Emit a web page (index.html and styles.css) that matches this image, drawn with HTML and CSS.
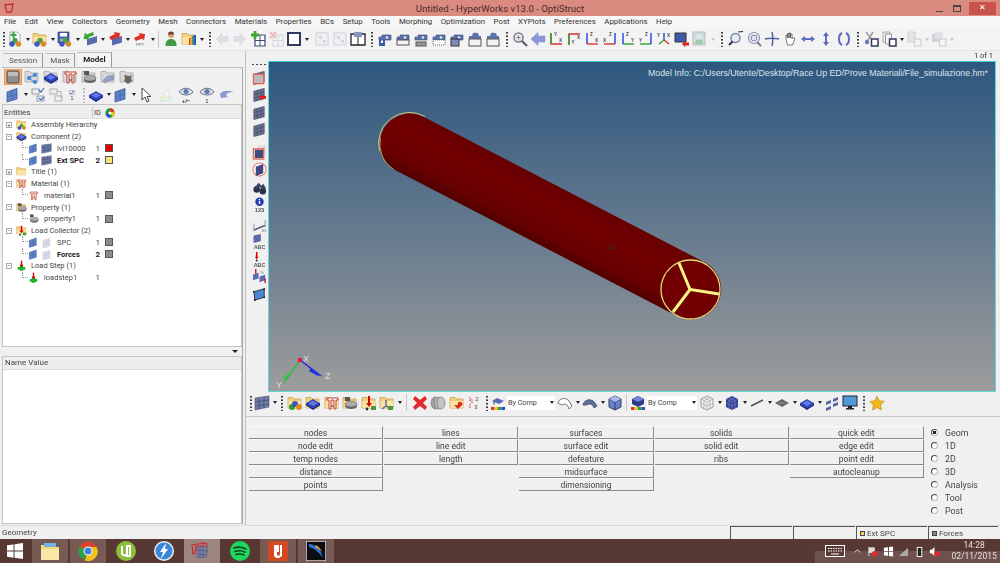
FILE: index.html
```html
<!DOCTYPE html>
<html lang="en">
<head>
<meta charset="utf-8">
<title>HyperWorks</title>
<link rel="stylesheet" href="styles.css">
</head>
<body>
<svg class="defs" width="0" height="0" aria-hidden="true">
  <defs>
    <symbol id="folder" viewBox="0 0 16 16"><path d="M1 4V2.500h5l1 1.500h7v9H1z" fill="#f4cf78" stroke="#c9a050" stroke-width=".8"/><path d="M1.500 6h12.500v7H1.500z" fill="#fbe3a4"/></symbol>
    <symbol id="balls" viewBox="0 0 16 16"><circle cx="8" cy="9.500" r="2.700" fill="#4aa53a"/><circle cx="5" cy="13" r="2.700" fill="#3c55c0"/><circle cx="11.500" cy="13" r="2.700" fill="#d98a25"/></symbol>
    <symbol id="panel" viewBox="0 0 16 16"><path d="M2 5l10-3.500v10.500l-10 3z" fill="#5f81c6" stroke="#2f4f95" stroke-width=".7"/><path d="M7 3.500v10.500M2 10l10-3" stroke="#3c5ba0" stroke-width=".5"/></symbol>
    <symbol id="meshp" viewBox="0 0 16 16"><path d="M2 4.500l11-3v11l-11 3z" fill="#6b7390" stroke="#3c4368" stroke-width=".7"/><path d="M5.500 3.500v11M9.500 2.500v11M2 8l11-3M2 12l11-3" stroke="#3c4368" stroke-width=".6"/></symbol>
    <symbol id="faintp" viewBox="0 0 16 16"><path d="M3 5l10-3v11l-10 3z" fill="#d9dce6" stroke="#bcc0cc" stroke-width=".6"/><path d="M8 3.500v11M3 10l10-3" stroke="#bcc0cc" stroke-width=".5"/></symbol>
    <symbol id="disc" viewBox="0 0 16 16"><path d="M8 4.500l7 4-7 4.500-7-4.500z" fill="#2e45c8" stroke="#1c2a85" stroke-width=".6"/><path d="M1 8.500v2l7 4.500 7-4.500v-2l-7 4.500z" fill="#1e2d8c"/><path d="M8 5.500l4.500 2.800-4.500 2.800-4.500-2.800z" fill="#5f78ea"/></symbol>
    <symbol id="matl" viewBox="0 0 16 16"><path d="M3 3h11v2h-2v9h-2V5H7v9H5V5H3z" fill="#fff" stroke="#c8402f" stroke-width="1"/><path d="M7.200 11h2.600" stroke="#444"/></symbol>
    <symbol id="prop" viewBox="0 0 16 16"><ellipse cx="9" cy="11" rx="6" ry="3" fill="#666"/><ellipse cx="9" cy="9" rx="6" ry="3" fill="#aaa" stroke="#555" stroke-width=".5"/><path d="M3 2h5v4H3z" fill="#555"/></symbol>
    <symbol id="load" viewBox="0 0 16 16"><path d="M8 1v9" stroke="#d00" stroke-width="2"/><path d="M5 8l3 4 3-4z" fill="#d00"/><rect x="10" y="11" width="5" height="4" fill="#4a9a3a"/><circle cx="6" cy="14" r="1.400" fill="#333"/></symbol>
    <symbol id="step" viewBox="0 0 16 16"><path d="M5.500 7h5v3h3v4h-3v1.500h-5V14h-3v-4h3z" fill="#20b030"/><path d="M8 1v8" stroke="#d00" stroke-width="2"/><path d="M5.500 7l2.500 4 2.500-4z" fill="#d00"/></symbol>
    <symbol id="wheel" viewBox="0 0 16 16"><circle cx="8" cy="8" r="7.500" fill="#1d9a3a"/><path d="M8 8V.5a7.500 7.500 0 0 1 7 5z" fill="#e23030"/><path d="M8 8l7-2.500A7.500 7.500 0 0 1 12 14.500z" fill="#e8c420"/><path d="M8 8V15.500A7.500 7.500 0 0 1 1 10.500z" fill="#2a50d0"/><circle cx="8" cy="8" r="2.500" fill="#fff"/></symbol>

    <symbol id="i-new" viewBox="0 0 16 16"><path d="M3 1h7l3 3v9H3z" fill="#fff" stroke="#889" stroke-width=".7"/><path d="M6.500 1v6M3.500 4h6" stroke="#3aa545" stroke-width="2"/><use href="#balls"/></symbol>
    <symbol id="i-open" viewBox="0 0 16 16"><use href="#folder"/><use href="#balls"/></symbol>
    <symbol id="i-save" viewBox="0 0 16 16"><path d="M1 1h11v11H1z" fill="#4f63a8" stroke="#2d3c78" stroke-width=".7"/><path d="M3 2h7v3.500H3z" fill="#fff"/><path d="M3.500 8h6v4h-6z" fill="#c8cde0"/><use href="#balls"/></symbol>
    <symbol id="i-imp" viewBox="0 0 16 16"><path d="M5 14.500l10-3V5L5 8z" fill="#5a6cb0"/><path d="M11 1L5 3.500 3 1.500 1.500 8l6.500.500-1.800-2L12 4z" fill="#3da82e"/></symbol>
    <symbol id="i-exp" viewBox="0 0 16 16"><path d="M5 14.500l10-3V5L5 8z" fill="#5a6cb0"/><path d="M2 6l6-3-1.500-2 6.500 1-1 6.500-1.800-2L4 9z" fill="#dd2f25"/></symbol>
    <symbol id="i-ppt" viewBox="0 0 16 16"><path d="M2 7l6-3-1.500-2 6.500 1-1 6.500-1.800-2L4 10z" fill="#dd2f25"/><text x="8" y="15" font-size="4" text-anchor="middle" fill="#555" font-family="Liberation Sans">PPT</text></symbol>
    <symbol id="i-user" viewBox="0 0 16 16"><circle cx="8" cy="4" r="3" fill="#d9a070"/><path d="M5 3.500a3 3 0 0 1 6 0z" fill="#6b4326"/><path d="M2.500 15c0-5 2-7 5.500-7s5.500 2 5.500 7z" fill="#3f9a45"/></symbol>
    <symbol id="i-rain" viewBox="0 0 16 16"><use href="#folder"/><path d="M8 7h1.500v7H8z" fill="#e23030"/><path d="M9.500 6h1.500v8H9.500z" fill="#e8b420"/><path d="M11 5h1.500v9H11z" fill="#2aa040"/><path d="M12.500 4H15v10h-2.500z" fill="#2a50d0"/></symbol>
    <symbol id="i-al" viewBox="0 0 16 16"><path d="M2 8l6-6v3.500h6v5H8V14z" fill="#dfe1e8" stroke="#cfd2da" stroke-width=".5"/></symbol>
    <symbol id="i-ar" viewBox="0 0 16 16"><path d="M14 8L8 2v3.500H2v5h6V14z" fill="#dfe1e8" stroke="#cfd2da" stroke-width=".5"/></symbol>
    <symbol id="i-plusg" viewBox="0 0 16 16"><path d="M5 4h10v11H5z" fill="#fff" stroke="#3c4a78" stroke-width="1.200"/><path d="M10 4v11M5 9.500h10" stroke="#3c4a78"/><path d="M5 0v8M1 4h8" stroke="#3fa535" stroke-width="2.800"/></symbol>
    <symbol id="i-xg" viewBox="0 0 16 16"><path d="M5 4h10v11H5z" fill="#f4f4f6" stroke="#d5d6de"/><path d="M10 4v11M5 9.500h10" stroke="#d5d6de"/><path d="M2 1l6 6M8 1L2 7" stroke="#eebcbc" stroke-width="2"/></symbol>
    <symbol id="i-sq" viewBox="0 0 16 16"><rect x="2" y="2" width="12" height="12" fill="#fff" stroke="#333a60" stroke-width="2"/></symbol>
    <symbol id="i-fg" viewBox="0 0 16 16"><rect x="2" y="2" width="12" height="12" fill="#eef0f4" stroke="#d5d6de" stroke-width="1.200"/><rect x="5" y="5" width="3" height="3" fill="#d5d6de"/><rect x="9" y="9" width="3" height="3" fill="#d5d6de"/></symbol>
    <symbol id="i-book" viewBox="0 0 16 16"><path d="M1 3h14v11H1z" fill="#fff" stroke="#222" stroke-width="1.300"/><path d="M8 3v11" stroke="#222"/><path d="M4 1h8v5H4z" fill="#8894c2"/></symbol>
    <symbol id="cam" viewBox="0 0 16 16"><path d="M2 6h3V4h9v5H2z" fill="#5b72ac" stroke="#38497f" stroke-width=".6"/><circle cx="10" cy="6.500" r="1.800" fill="#dfe4f2" stroke="#38497f" stroke-width=".6"/></symbol>
    <symbol id="c1" viewBox="0 0 16 16"><use href="#cam"/><path d="M2 9h6v6H2z" fill="#3f5aa8"/><path d="M4 9.500h2V12H4z" fill="#fff"/></symbol>
    <symbol id="c2" viewBox="0 0 16 16"><use href="#cam"/><rect x="2" y="9" width="12" height="5" fill="#f4f4f4" stroke="#555"/></symbol>
    <symbol id="c3" viewBox="0 0 16 16"><use href="#cam"/><rect x="3" y="11" width="10" height="4" fill="#999" stroke="#555"/></symbol>
    <symbol id="c4" viewBox="0 0 16 16"><use href="#cam"/><rect x="2" y="9" width="12" height="5" fill="#fff" stroke="#666" stroke-dasharray="1 1"/></symbol>
    <symbol id="c5" viewBox="0 0 16 16"><use href="#cam"/><rect x="2" y="8" width="8" height="7" fill="#7e8db8" stroke="#333"/></symbol>
    <symbol id="c6" viewBox="0 0 16 16"><path d="M2 5h3l1-3h5l1 3h2v5H2z" fill="#5b72ac"/><circle cx="8" cy="3" r="1.500" fill="#5b72ac"/><rect x="2" y="8" width="12" height="7" fill="#f4f4f4" stroke="#555"/></symbol>
    <symbol id="i-zoomg" viewBox="0 0 16 16"><circle cx="6.500" cy="6.500" r="4.500" fill="#e8e8e8" stroke="#7a7f8c" stroke-width="1.500"/><path d="M10 10l5 5" stroke="#5a5f70" stroke-width="2.200"/><path d="M4.500 6.500h4M6.500 4.500v4" stroke="#888"/></symbol>
    <symbol id="i-back" viewBox="0 0 16 16"><path d="M1 8l7-6.500V5h7v6H8v3.500z" fill="#8b98dc" stroke="#7c8ac8" stroke-width=".5"/></symbol>

    <symbol id="ax-yx" viewBox="0 0 16 16"><path d="M3 2v11h11" fill="none" stroke="#e03030" stroke-width="1.400"/><path d="M3 2v11" stroke="#20a830" stroke-width="1.400"/><text x="6" y="5" class="axt">Y</text><text x="11" y="10.500" class="axt">X</text></symbol>
    <symbol id="ax-xy" viewBox="0 0 16 16"><path d="M3 14V3h11" fill="none" stroke="#e03030" stroke-width="1.400"/><path d="M3 14V3" stroke="#20a830" stroke-width="1.400"/><text x="5.500" y="13" class="axt">Y</text><text x="11" y="8" class="axt">X</text></symbol>
    <symbol id="ax-zx" viewBox="0 0 16 16"><path d="M3 13h11" stroke="#e03030" stroke-width="1.400"/><path d="M3 2v11" stroke="#2540d8" stroke-width="1.400"/><text x="6" y="5" class="axt">Z</text><text x="11" y="10.500" class="axt">X</text></symbol>
    <symbol id="ax-xz" viewBox="0 0 16 16"><path d="M2 13h11" stroke="#e03030" stroke-width="1.400"/><path d="M13 2v11" stroke="#2540d8" stroke-width="1.400"/><text x="7" y="5" class="axt">Z</text><text x="1" y="10.500" class="axt">X</text></symbol>
    <symbol id="ax-zy" viewBox="0 0 16 16"><path d="M3 13h11" stroke="#20a830" stroke-width="1.400"/><path d="M3 2v11" stroke="#2540d8" stroke-width="1.400"/><text x="6" y="5" class="axt">Z</text><text x="11" y="10.500" class="axt">Y</text></symbol>
    <symbol id="ax-yz" viewBox="0 0 16 16"><path d="M2 13h11" stroke="#20a830" stroke-width="1.400"/><path d="M13 2v11" stroke="#2540d8" stroke-width="1.400"/><text x="7" y="5" class="axt">Z</text><text x="1" y="10.500" class="axt">Y</text></symbol>
    <symbol id="ax-iso" viewBox="0 0 16 16"><path d="M8 9V2" stroke="#2540d8" stroke-width="1.400"/><path d="M8 9l5 4" stroke="#e03030" stroke-width="1.400"/><path d="M8 9l-5 4" stroke="#20a830" stroke-width="1.400"/><text x="1" y="6" class="axt">Y</text><text x="11" y="6" class="axt">X</text></symbol>
    <symbol id="i-scr" viewBox="0 0 16 16"><path d="M1 2h11v9H1z" fill="#3f5aa8" stroke="#333"/><path d="M8 13l3-3v1.500h4v3h-4V16z" fill="#e02020"/></symbol>
    <symbol id="i-pers" viewBox="0 0 16 16"><path d="M1 1h12v13H1z" fill="#cfdde0" stroke="#bbb"/><circle cx="7" cy="6" r="2.500" fill="#e2e6ea"/><path d="M3 13c0-4 2-4.500 4-4.500s4 .500 4 4.500z" fill="#9fcaa8"/></symbol>
    <symbol id="i-zm" viewBox="0 0 16 16"><circle cx="7.500" cy="7" r="4.500" fill="#e8ecf6" stroke="#7886a8" stroke-width="1.500"/><path d="M4.500 10.500L1 14" stroke="#333" stroke-width="2"/><path d="M10 1l5-.5" stroke="#333" stroke-width="1.200"/></symbol>
    <symbol id="i-zo" viewBox="0 0 16 16"><circle cx="8" cy="7" r="5.500" fill="none" stroke="#8c94ae" stroke-width="1.200"/><circle cx="8" cy="7" r="3" fill="#dde2f0" stroke="#7886a8"/><path d="M11 11l4 4" stroke="#7a7f8c" stroke-width="2"/></symbol>
    <symbol id="i-cross" viewBox="0 0 16 16"><path d="M8 1c1 3 1 11 0 14M1 8c3-1 11-1 14 0" fill="none" stroke="#4f5f9a" stroke-width="1.500"/></symbol>
    <symbol id="i-hand" viewBox="0 0 16 16"><path d="M4 8V4h1.500v3V2.500H7V7V2h1.500v5V3H10v5l1.500-1.500 1.500 1-2.500 6.500h-5z" fill="#fff" stroke="#444" stroke-width=".7"/></symbol>
    <symbol id="i-h" viewBox="0 0 16 16"><path d="M1 8l4-3v2h6V5l4 3-4 3V9H5v2z" fill="#5c6cc0"/></symbol>
    <symbol id="i-v" viewBox="0 0 16 16"><path d="M8 1l3 4H9v6h2l-3 4-3-4h2V5H5z" fill="#5c6cc0"/></symbol>
    <symbol id="i-rot" viewBox="0 0 16 16"><path d="M6 2C2 4 2 12 6 14M10 2c4 2 4 10 0 12" fill="none" stroke="#5c6cc0" stroke-width="2"/></symbol>
    <symbol id="i-cut" viewBox="0 0 16 16"><path d="M3 1l7 9M10 1L5 9" stroke="#999" stroke-width="1.500"/><circle cx="4" cy="11" r="2.200" fill="#6a7ab0"/><rect x="8.500" y="8" width="6.500" height="7" fill="#fff" stroke="#333a60" stroke-width="1.500"/></symbol>
    <symbol id="i-copy" viewBox="0 0 16 16"><path d="M2 1h7v10H2z" fill="#eee" stroke="#aaa"/><path d="M4.500 3h6v10h-6z" fill="#f5f5f5" stroke="#999"/><rect x="8.500" y="8" width="6.500" height="7" fill="#fff" stroke="#333a60" stroke-width="1.500"/></symbol>
    <symbol id="i-paste" viewBox="0 0 16 16"><path d="M2 1h7v10H2z" fill="#e4e5ea" stroke="#d0d1d8"/><rect x="8.500" y="8" width="6.500" height="7" fill="#f6f6f8" stroke="#d0d1d8" stroke-width="1.200"/></symbol>
    <symbol id="i-paste2" viewBox="0 0 16 16"><path d="M1 3h9v8H1z" fill="#d0d3da"/><path d="M4 1h8v7H4z" fill="#e0e2e6"/><rect x="8.500" y="8" width="6.500" height="7" fill="#f6f6f8" stroke="#d0d1d8" stroke-width="1.200"/></symbol>

    <symbol id="l-active" viewBox="0 0 16 16"><rect x="2" y="2" width="12" height="12" rx="1" fill="#8f8f8f" stroke="#555"/><path d="M3 3h10v4H3z" fill="#bdbdbd"/></symbol>
    <symbol id="f-gray" viewBox="0 0 16 16"><path d="M1 4V2.500h5l1 1.500h7v9H1z" fill="#d8d8d8" stroke="#a0a0a0" stroke-width=".7"/></symbol>
    <symbol id="l-tree" viewBox="0 0 16 16"><use href="#f-gray"/><path d="M5 9l5-3M5 9l5 4" stroke="#2f6fd0"/><circle cx="5" cy="9" r="2" fill="#3a82e0"/><circle cx="11" cy="6" r="2" fill="#3a82e0"/><circle cx="11" cy="13" r="2" fill="#3a82e0"/></symbol>
    <symbol id="l-comp" viewBox="0 0 16 16"><use href="#f-gray"/><use href="#disc"/></symbol>
    <symbol id="l-matl" viewBox="0 0 16 16"><use href="#f-gray"/><use href="#matl"/></symbol>
    <symbol id="l-prop" viewBox="0 0 16 16"><use href="#f-gray"/><use href="#prop"/></symbol>
    <symbol id="l-surf" viewBox="0 0 16 16"><use href="#f-gray"/><path d="M3 12c3-5 7-6 11-5l-1 4c-4 0-6 1-8 3z" fill="#9aa2c8" stroke="#6a73a0" stroke-width=".6"/></symbol>
    <symbol id="l-stack" viewBox="0 0 16 16"><use href="#f-gray"/><path d="M5 6l5 1 3-1-1 3 1 3-4 3-4-3 1-3z" fill="#70625e"/></symbol>
    <symbol id="l-check" viewBox="0 0 16 16"><rect x="2" y="2" width="7" height="5" fill="#eee" stroke="#9a9aa8"/><rect x="7" y="9" width="7" height="5" fill="#eee" stroke="#9a9aa8"/><path d="M9 3l2 2 3-4M9 11l2 2 3-3" fill="none" stroke="#3f6fd0" stroke-width="1.200"/></symbol>
    <symbol id="l-uncheck" viewBox="0 0 16 16"><rect x="2" y="2" width="7" height="5" fill="#eee" stroke="#b0b0b8"/><rect x="7" y="9" width="7" height="5" fill="#eee" stroke="#b0b0b8"/><path d="M9 4.500h4v7" fill="none" stroke="#b0b0b8"/></symbol>
    <symbol id="l-check1" viewBox="0 0 16 16"><path d="M5 5l2 2 3-5" fill="none" stroke="#3f6fd0" stroke-width="1.200"/><rect x="5" y="2" width="6" height="5" fill="none" stroke="#aaa"/><text x="8" y="14" font-size="7" text-anchor="middle" fill="#444" font-family="Liberation Sans">1</text></symbol>
    <symbol id="l-arrow" viewBox="0 0 16 16"><path d="M4 1v12l3-3 2 5 2-1-2-4.500h4z" fill="#fff" stroke="#333" stroke-width=".9"/></symbol>
    <symbol id="l-erase" viewBox="0 0 16 16"><path d="M2 10h12v4H2z" fill="#dff3e8" stroke="#c8e6d8" stroke-width=".6"/><path d="M2 10h12v1H2z" fill="#f2ecae"/><path d="M6 10V5l4-2 2 3-2 4" fill="#f5f5f5" stroke="#ccc" stroke-width=".6"/></symbol>
    <symbol id="eye" viewBox="0 0 16 12"><path d="M1 5c3-5 11-5 14 0-3 4-11 4-14 0z" fill="#d8dbe6" stroke="#606a80" stroke-width=".9"/><circle cx="8" cy="4.500" r="2.500" fill="#5c7bb0"/></symbol>
    <symbol id="l-eyepm" viewBox="0 0 16 16"><use href="#eye" width="16" height="12"/><text x="8" y="15.500" font-size="6" text-anchor="middle" fill="#333" font-weight="700" font-family="Liberation Sans">+/−</text></symbol>
    <symbol id="l-eye1" viewBox="0 0 16 16"><use href="#eye" width="16" height="12"/><text x="8" y="15.500" font-size="6" text-anchor="middle" fill="#333" font-family="Liberation Sans">1</text></symbol>
    <symbol id="l-undo" viewBox="0 0 16 16"><path d="M1 7c3-4 8-4 14-2-5 0-7 1-8 3l2 2-7 1z" fill="#8c9ad0"/></symbol>

    <symbol id="v-1" viewBox="0 0 16 16"><use href="#meshp"/><rect x="1.500" y="4.500" width="11" height="10" fill="#e9dcd6" fill-opacity=".7" stroke="#e8604a" stroke-width="1.300"/></symbol>
    <symbol id="v-2" viewBox="0 0 16 16"><use href="#meshp"/><path d="M7 11l4-3v1.500h4v3h-4V14z" fill="#e02020"/></symbol>
    <symbol id="v-3" viewBox="0 0 16 16"><use href="#meshp"/></symbol>
    <symbol id="v-5" viewBox="0 0 16 16"><path d="M6 1l9-1v11H6z" fill="#dcdce2"/><path d="M3 5h9v9H3z" fill="#3f4a80"/><rect x="1.500" y="4" width="11" height="11" fill="none" stroke="#e8604a" stroke-width="1.300"/></symbol>
    <symbol id="v-6" viewBox="0 0 16 16"><circle cx="8" cy="8" r="7" fill="#fff" stroke="#e8806a" stroke-width="1.200"/><path d="M4 5l8-3v10l-8 3z" fill="#3f4a80"/></symbol>
    <symbol id="v-bino" viewBox="0 0 16 16"><circle cx="5" cy="10" r="3.500" fill="#2a3048"/><circle cx="11.500" cy="12" r="3.500" fill="#2a3048"/><path d="M3 8l4-5 3 3 2-2 3 5-4 1-3-3-2 3z" fill="#3a4060"/></symbol>
    <symbol id="v-info" viewBox="0 0 16 16"><circle cx="8" cy="5" r="4.500" fill="#1f3fb0"/><path d="M7.300 4h1.400v3.500H7.300zM7.300 2h1.400v1.200H7.300z" fill="#fff"/><text x="8" y="15.500" font-size="6.200" text-anchor="middle" font-weight="700" fill="#555" font-family="Liberation Sans">123</text></symbol>
    <symbol id="v-graph" viewBox="0 0 16 16"><path d="M2 14l12-5" stroke="#444a70" stroke-width="1.500"/><path d="M2 7v8M14 3v8" stroke="#8b90a8"/><text x="10" y="15.500" font-size="4" fill="#555" font-family="Liberation Sans">10²</text></symbol>
    <symbol id="v-abc" viewBox="0 0 16 16"><path d="M2 2l7-1.500v7L2 9z" fill="#5a6ab0" stroke="#333c78" stroke-width=".5"/><text x="8" y="15.500" font-size="5.800" text-anchor="middle" font-weight="700" fill="#555" font-family="Liberation Sans">ABC</text></symbol>
    <symbol id="v-abcf" viewBox="0 0 16 16"><path d="M5 0v6" stroke="#d00" stroke-width="1.600"/><path d="M3 5l2 3 2-3z" fill="#d00"/><circle cx="5" cy="9" r="1" fill="#222"/><text x="8" y="15.500" font-size="5.800" text-anchor="middle" font-weight="700" fill="#555" font-family="Liberation Sans">ABC</text></symbol>
    <symbol id="v-mix" viewBox="0 0 16 16"><path d="M1 6l6-2v6L1 12z" fill="#5a6ab0"/><path d="M8 8l6-2v6l-6 2z" fill="#5a6ab0"/><path d="M4 0v5" stroke="#d00" stroke-width="1.400"/><path d="M14 10v5" stroke="#d00" stroke-width="1.400"/><text x="9" y="5" font-size="4" fill="#555" font-family="Liberation Sans">%</text></symbol>
    <symbol id="v-sheet" viewBox="0 0 16 16"><path d="M2 5l11-3v9L3 14z" fill="#4a85d8" stroke="#333"/><circle cx="2" cy="5" r="1" fill="#222"/><circle cx="13" cy="2" r="1" fill="#222"/><circle cx="13" cy="11" r="1" fill="#222"/><circle cx="3" cy="14" r="1" fill="#222"/></symbol>

    <symbol id="b-gcomp" viewBox="0 0 16 16"><use href="#folder"/><circle cx="5" cy="12" r="3" fill="#2f9b30"/><circle cx="8" cy="9" r="3" fill="#3c55c0"/><circle cx="12" cy="12" r="3" fill="#e08a25"/></symbol>
    <symbol id="b-fdisc" viewBox="0 0 16 16"><use href="#folder"/><use href="#disc"/></symbol>
    <symbol id="b-fmat" viewBox="0 0 16 16"><use href="#folder"/><use href="#matl"/></symbol>
    <symbol id="b-fprop" viewBox="0 0 16 16"><use href="#folder"/><use href="#prop"/></symbol>
    <symbol id="b-fload" viewBox="0 0 16 16"><use href="#folder"/><use href="#load"/></symbol>
    <symbol id="b-fmeas" viewBox="0 0 16 16"><use href="#folder"/><path d="M7 5v6l6 3M7 11l-4 3" fill="none" stroke="#566a96" stroke-width="1.400"/><rect x="9" y="11" width="5" height="4" fill="#4a9a3a"/></symbol>
    <symbol id="b-del" viewBox="0 0 16 16"><path d="M3 1l5 4 5-4 2 3-4 4 4 4-2 3-5-4-5 4-2-3 4-4-4-4z" fill="#e02a32"/></symbol>
    <symbol id="b-disks" viewBox="0 0 16 16"><ellipse cx="5" cy="8" rx="4" ry="6" fill="#a4a4a4" stroke="#777" stroke-width=".7"/><ellipse cx="8" cy="8" rx="4" ry="6" fill="#b4b4b4" stroke="#777" stroke-width=".7"/><ellipse cx="11" cy="8" rx="4" ry="6" fill="#c4c4c4" stroke="#777" stroke-width=".7"/></symbol>
    <symbol id="b-fold-r" viewBox="0 0 16 16"><use href="#folder"/><path d="M9 7v3H5l4 4 5-5-2-2z" fill="#e02a20"/></symbol>
    <symbol id="b-num" viewBox="0 0 16 16"><path d="M3 2v4M3 9v5" stroke="#d03030" stroke-dasharray="1.500 1"/><text x="10" y="6" font-size="6" fill="#555" text-anchor="middle" font-family="Liberation Sans">2</text><text x="9" y="14" font-size="6" fill="#444" text-anchor="middle" font-family="Liberation Sans">3</text><text x="5" y="8" font-size="5" fill="#d03030" text-anchor="middle" font-family="Liberation Sans">1</text></symbol>
    <symbol id="b-sel" viewBox="0 0 16 16"><path d="M2 6l5-3 7 3-5 3z" fill="#5a6cb8"/><path d="M4 6.500v3" stroke="#555" stroke-width="1.300"/><rect x="1" y="12" width="3.500" height="3" fill="#e23030"/><rect x="4.500" y="12" width="3.500" height="3" fill="#e8c420"/><rect x="8" y="12" width="3.500" height="3" fill="#2aa040"/><rect x="11.500" y="12" width="3.500" height="3" fill="#2a50d0"/></symbol>
    <symbol id="b-wire" viewBox="0 0 16 16"><path d="M1 8c1-5 8-6 11-2l3 5-3 3c-1-5-5-6-7-4z" fill="#fff" stroke="#666" stroke-width=".9"/></symbol>
    <symbol id="b-solidcurve" viewBox="0 0 16 16"><path d="M1 10c1-6 9-7 12-2l2 3-3 2c-1-4-5-5-7-3z" fill="#5d6f94" stroke="#3b4870" stroke-width=".8"/></symbol>
    <symbol id="b-cube" viewBox="0 0 16 16"><path d="M8 1l6 3v8l-6 3-6-3V4z" fill="#6a82cc" stroke="#333c60"/><path d="M2 4l6 3 6-3M8 7v8" fill="none" stroke="#2f3a68"/><path d="M2 4l6-3 6 3-6 3z" fill="#aabbea"/></symbol>
    <symbol id="b-gsel" viewBox="0 0 16 16"><path d="M8 1l6 3v5l-6 3-6-3V4z" fill="#2e3d8a"/><path d="M2 4l6-3 6 3-6 3z" fill="#6f82d4"/><rect x="1" y="12" width="3.500" height="3" fill="#e23030"/><rect x="4.500" y="12" width="3.500" height="3" fill="#e8c420"/><rect x="8" y="12" width="3.500" height="3" fill="#2aa040"/><rect x="11.500" y="12" width="3.500" height="3" fill="#2a50d0"/></symbol>
    <symbol id="b-wcube" viewBox="0 0 16 16"><path d="M8 1l6 3v8l-6 3-6-3V4z" fill="#f4f4f4" stroke="#888" stroke-width=".8"/><path d="M2 4l6 3 6-3M8 7v8M5 2.500l6 3v8M11 2.500l-6 3v8M2 8l6 3 6-3" fill="none" stroke="#999" stroke-width=".6"/></symbol>
    <symbol id="b-scube" viewBox="0 0 16 16"><path d="M8 1l6 3v8l-6 3-6-3V4z" fill="#333f94"/><path d="M2 4l6 3 6-3M8 7v8M5 2.500l6 3v8M11 2.500l-6 3v8M2 8l6 3 6-3" fill="none" stroke="#7c88c4" stroke-width=".6"/></symbol>
    <symbol id="b-line" viewBox="0 0 16 16"><path d="M2 11l12-6" stroke="#555" stroke-width="1.600"/></symbol>
    <symbol id="b-dia" viewBox="0 0 16 16"><path d="M8 4l7 4-7 4-7-4z" fill="#666"/><path d="M5 8h6" stroke="#999"/></symbol>
    <symbol id="b-dots" viewBox="0 0 16 16"><path d="M2 7l5-2v3l-5 2zM9 4l5-2v3l-5 2zM2 13l5-2v3l-5 2zM9 9l5-2v3l-5 2z" fill="#5a63a8"/></symbol>
    <symbol id="b-mon" viewBox="0 0 16 16"><rect x="1" y="1" width="14" height="10" fill="#4f9ad8" stroke="#223"/><path d="M6 11h4v2h2v1.500H4V13h2z" fill="#223"/></symbol>
    <symbol id="b-star" viewBox="0 0 16 16"><path d="M8 1l2.200 4.700 5 .7-3.600 3.600.9 5L8 12.600 3.500 15l.9-5L.8 6.400l5-.7z" fill="#f2b81a" stroke="#b5851a" stroke-width=".6"/></symbol>

    <symbol id="t-grid" viewBox="0 0 16 16"><path d="M1 3l14-2v11L1 15z" fill="#6f7ea8" stroke="#333c60" stroke-width=".5"/><path d="M5 3v11M10 2v11M1 7l14-2M1 11l14-2" stroke="#333c60" stroke-width=".6"/></symbol>
    <symbol id="t-grid2" viewBox="0 0 16 16"><use href="#faintp"/></symbol>
  </defs>
</svg>

<div class="app">
  <header class="titlebar">
    <svg class="app-ico" viewBox="0 0 12 12"><path d="M1 2l9-1-2 9-5 0z" fill="none" stroke="#b7261e" stroke-width="1.200"/></svg>
    <span class="title">Untitled - HyperWorks v13.0 - OptiStruct</span>
    <div class="winctl">
      <span class="min"></span><span class="max"></span><span class="close">✕</span>
    </div>
  </header>

  <nav class="menubar">
    <span>File</span><span>Edit</span><span>View</span><span>Collectors</span><span>Geometry</span><span>Mesh</span><span>Connectors</span><span>Materials</span><span>Properties</span><span>BCs</span><span>Setup</span><span>Tools</span><span>Morphing</span><span>Optimization</span><span>Post</span><span>XYPlots</span><span>Preferences</span><span>Applications</span><span>Help</span>
  </nav>

  <div class="toolbar">
    <i class="grip"></i>
    <svg class="ic"><use href="#i-new"/></svg><i class="dd"></i>
    <svg class="ic"><use href="#i-open"/></svg><i class="dd"></i>
    <svg class="ic"><use href="#i-save"/></svg><i class="dd"></i>
    <svg class="ic"><use href="#i-imp"/></svg><i class="dd"></i>
    <svg class="ic"><use href="#i-exp"/></svg><i class="dd"></i>
    <svg class="ic"><use href="#i-ppt"/></svg><i class="dd"></i>
    <i class="sep"></i>
    <svg class="ic"><use href="#i-user"/></svg>
    <svg class="ic"><use href="#i-rain"/></svg><i class="dd"></i>
    <i class="grip g8"></i>
    <svg class="ic"><use href="#i-al"/></svg>
    <svg class="ic"><use href="#i-ar"/></svg>
    <svg class="ic"><use href="#i-plusg"/></svg>
    <svg class="ic"><use href="#i-xg"/></svg>
    <svg class="ic"><use href="#i-sq"/></svg><i class="dd"></i>
    <i class="gap3"></i>
    <svg class="ic"><use href="#i-fg"/></svg>
    <svg class="ic"><use href="#i-fg"/></svg>
    <svg class="ic"><use href="#i-book"/></svg>
    <i class="grip g9"></i>
    <svg class="ic"><use href="#c1"/></svg>
    <svg class="ic"><use href="#c2"/></svg>
    <svg class="ic"><use href="#c3"/></svg>
    <svg class="ic"><use href="#c4"/></svg>
    <svg class="ic"><use href="#c5"/></svg>
    <svg class="ic"><use href="#c6"/></svg>
    <svg class="ic"><use href="#c6"/></svg>
    <i class="grip g9"></i>
    <svg class="ic"><use href="#i-zoomg"/></svg>
    <svg class="ic"><use href="#i-back"/></svg>
    <svg class="ic"><use href="#ax-yx"/></svg>
    <svg class="ic"><use href="#ax-xy"/></svg>
    <svg class="ic"><use href="#ax-zx"/></svg>
    <svg class="ic"><use href="#ax-xz"/></svg>
    <svg class="ic"><use href="#ax-zy"/></svg>
    <svg class="ic"><use href="#ax-yz"/></svg>
    <svg class="ic"><use href="#ax-iso"/></svg>
    <svg class="ic"><use href="#i-scr"/></svg>
    <svg class="ic"><use href="#i-pers"/></svg><i class="dd faded"></i>
    <i class="grip g11"></i>
    <svg class="ic"><use href="#i-zm"/></svg>
    <svg class="ic"><use href="#i-zo"/></svg>
    <svg class="ic"><use href="#i-cross"/></svg>
    <svg class="ic"><use href="#i-hand"/></svg>
    <svg class="ic"><use href="#i-h"/></svg>
    <svg class="ic"><use href="#i-v"/></svg>
    <svg class="ic"><use href="#i-rot"/></svg>
    <i class="grip g9"></i>
    <svg class="ic"><use href="#i-cut"/></svg>
    <svg class="ic"><use href="#i-copy"/></svg><i class="dd"></i>
    <svg class="ic"><use href="#i-paste"/></svg><i class="dd faded"></i>
    <svg class="ic"><use href="#i-paste2"/></svg><i class="dd faded"></i>
  </div>

  <main class="body">
    <aside class="left">
      <div class="tabs">
        <span class="tab">Session</span>
        <span class="tab">Mask</span>
        <span class="tab on">Model</span>
      </div>
      <div class="tabpanel">
        <div class="lrow r1">
          <span class="lic active"><svg class="ic"><use href="#l-active"/></svg></span>
          <svg class="ic"><use href="#l-tree"/></svg>
          <svg class="ic"><use href="#l-comp"/></svg>
          <svg class="ic"><use href="#l-matl"/></svg>
          <svg class="ic"><use href="#l-prop"/></svg>
          <svg class="ic"><use href="#l-surf"/></svg>
          <svg class="ic"><use href="#l-stack"/></svg>
        </div>
        <div class="lrow r2">
          <svg class="ic"><use href="#panel"/></svg><i class="dd"></i>
          <svg class="ic"><use href="#l-check"/></svg>
          <svg class="ic"><use href="#l-uncheck"/></svg>
          <svg class="ic nar"><use href="#l-check1"/></svg>
          <i class="grip g8 faint"></i>
          <svg class="ic"><use href="#disc"/></svg><i class="dd"></i>
          <svg class="ic"><use href="#panel"/></svg><i class="dd"></i>
          <svg class="ic"><use href="#l-arrow"/></svg>
          <svg class="ic wide"><use href="#l-erase"/></svg>
          <svg class="ic wide"><use href="#l-eyepm"/></svg>
          <svg class="ic wide"><use href="#l-eye1"/></svg>
          <svg class="ic wide"><use href="#l-undo"/></svg>
        </div>
        <section class="tree">
          <div class="thead"><span class="th-name">Entities</span><span class="th-id">ID</span><svg class="th-wheel"><use href="#wheel"/></svg></div>
          <div class="trow"><i class="exp">+</i><svg class="ti"><use href="#i-open"/></svg><span class="tl">Assembly Hierarchy</span></div>
          <div class="trow"><i class="exp">−</i><svg class="ti"><use href="#b-fdisc"/></svg><span class="tl">Component (2)</span></div>
          <div class="trow sub"><i class="conn"></i><svg class="ti"><use href="#panel"/></svg><svg class="ti"><use href="#t-grid"/></svg><span class="tn">lvl10000</span><span class="tid">1</span><i class="sw red"></i></div>
          <div class="trow sub b"><i class="conn"></i><svg class="ti"><use href="#panel"/></svg><svg class="ti"><use href="#t-grid"/></svg><span class="tn">Ext SPC</span><span class="tid">2</span><i class="sw yel"></i></div>
          <div class="trow"><i class="exp">+</i><svg class="ti"><use href="#folder"/></svg><span class="tl">Title (1)</span></div>
          <div class="trow"><i class="exp">−</i><svg class="ti"><use href="#b-fmat"/></svg><span class="tl">Material (1)</span></div>
          <div class="trow sub"><i class="conn"></i><svg class="ti"><use href="#matl"/></svg><span class="tn one">material1</span><span class="tid">1</span><i class="sw"></i></div>
          <div class="trow"><i class="exp">−</i><svg class="ti"><use href="#b-fprop"/></svg><span class="tl">Property (1)</span></div>
          <div class="trow sub"><i class="conn"></i><svg class="ti"><use href="#prop"/></svg><span class="tn one">property1</span><span class="tid">1</span><i class="sw"></i></div>
          <div class="trow"><i class="exp">−</i><svg class="ti"><use href="#b-fload"/></svg><span class="tl">Load Collector (2)</span></div>
          <div class="trow sub"><i class="conn"></i><svg class="ti"><use href="#panel"/></svg><svg class="ti"><use href="#t-grid2"/></svg><span class="tn">SPC</span><span class="tid">1</span><i class="sw"></i></div>
          <div class="trow sub b"><i class="conn"></i><svg class="ti"><use href="#panel"/></svg><svg class="ti"><use href="#t-grid2"/></svg><span class="tn">Forces</span><span class="tid">2</span><i class="sw"></i></div>
          <div class="trow"><i class="exp">−</i><svg class="ti"><use href="#step"/></svg><span class="tl">Load Step (1)</span></div>
          <div class="trow sub"><i class="conn"></i><svg class="ti"><use href="#step"/></svg><span class="tn one">loadstep1</span><span class="tid">1</span></div>
        </section>
        <div class="splitter"><i class="dd"></i></div>
        <section class="nv">
          <div class="nvhead">Name Value</div>
        </section>
      </div>
    </aside>

    <div class="right">
      <div class="pager">1 of 1</div>
      <div class="work">
        <div class="vbar">
          <i class="hgrip"></i>
          <svg class="ic"><use href="#v-1"/></svg>
          <svg class="ic"><use href="#v-2"/></svg>
          <svg class="ic"><use href="#v-3"/></svg>
          <svg class="ic"><use href="#v-3"/></svg>
          <svg class="ic brk"><use href="#v-5"/></svg>
          <svg class="ic"><use href="#v-6"/></svg>
          <svg class="ic"><use href="#v-bino"/></svg>
          <svg class="ic"><use href="#v-info"/></svg>
          <svg class="ic brk2"><use href="#v-graph"/></svg>
          <svg class="ic"><use href="#v-abc"/></svg>
          <svg class="ic"><use href="#v-abcf"/></svg>
          <svg class="ic"><use href="#v-mix"/></svg>
          <svg class="ic"><use href="#v-sheet"/></svg>
        </div>
        <div class="viewport">
          <div class="modelinfo">Model Info: C:/Users/Utente/Desktop/Race Up ED/Prove Materiali/File_simulazione.hm*</div>
          <svg class="scene" viewBox="268 61 726 329" width="726" height="329">
            <defs>
              <linearGradient id="tube" gradientUnits="userSpaceOnUse" x1="423" y1="115" x2="395" y2="169">
                <stop offset="0" stop-color="#660000"/><stop offset=".35" stop-color="#730000"/><stop offset=".8" stop-color="#680000"/><stop offset="1" stop-color="#520000"/>
              </linearGradient>
            </defs>
            <path d="M423 116L704 261.500A30 30 0 0 1 676 315L395 169.500A30 30 0 0 1 423 116z" fill="url(#tube)"/>
            <path d="M378.500 150A31 31 0 0 1 424 115.500" fill="none" stroke="#d6c674" stroke-width="1"/>
            <path d="M379.500 137A30 30 0 0 0 392 168" fill="none" stroke="#c8b060" stroke-width=".8"/>
            <circle cx="689.500" cy="288.500" r="29.500" fill="#730000" stroke="#dcdc78" stroke-width="1.300"/>
            <path d="M665 272L716 291" stroke="#4e0000" stroke-width=".8"/>
            <path d="M678 262L689 288.500L718 293M689 288.500L672 311" fill="none" stroke="#f8f486" stroke-width="3"/>
            <rect x="609" y="244" width="4" height="4" fill="none" stroke="#333" stroke-width=".8"/>
            <path d="M299 359L283 382" stroke="#1fc02a" stroke-width="1.300"/>
            <path d="M290 369l-5 10-2-1.500z" fill="#1fd02a"/>
            <path d="M299 359L320 375" stroke="#2020d8" stroke-width="1.300"/>
            <path d="M310 367l9 6.500-2 1.500-9-5z" fill="#2030e0"/>
            <rect x="297" y="357" width="4" height="4" fill="#e01a3a"/>
            <text x="302" y="361" class="tri">X</text>
            <text x="275" y="387" class="tri">Y</text>
            <text x="324" y="378" class="tri">Z</text>
          </svg>
        </div>
      </div>

      <div class="bbar">
        <i class="grip"></i>
        <svg class="ic"><use href="#t-grid"/></svg><i class="dd"></i>
        <i class="grip g6"></i>
        <svg class="ic"><use href="#b-gcomp"/></svg>
        <svg class="ic"><use href="#b-fdisc"/></svg>
        <svg class="ic"><use href="#b-fmat"/></svg>
        <svg class="ic"><use href="#b-fprop"/></svg>
        <svg class="ic"><use href="#b-fload"/></svg>
        <svg class="ic"><use href="#b-fmeas"/></svg><i class="dd"></i>
        <i class="sep"></i>
        <svg class="ic"><use href="#b-del"/></svg>
        <svg class="ic"><use href="#b-disks"/></svg>
        <svg class="ic"><use href="#b-fold-r"/></svg>
        <svg class="ic"><use href="#b-num"/></svg>
        <i class="grip g3"></i>
        <svg class="ic"><use href="#b-sel"/></svg>
        <span class="combo c1">By Comp<i class="dd"></i></span>
        <svg class="ic"><use href="#b-wire"/></svg><i class="dd"></i>
        <svg class="ic"><use href="#b-solidcurve"/></svg><i class="dd"></i>
        <svg class="ic"><use href="#b-cube"/></svg>
        <i class="sep s2"></i>
        <svg class="ic"><use href="#b-gsel"/></svg>
        <span class="combo c2">By Comp<i class="dd"></i></span>
        <svg class="ic"><use href="#b-wcube"/></svg><i class="dd"></i>
        <svg class="ic"><use href="#b-scube"/></svg><i class="dd"></i>
        <svg class="ic"><use href="#b-line"/></svg><i class="dd"></i>
        <svg class="ic"><use href="#b-dia"/></svg><i class="dd"></i>
        <svg class="ic"><use href="#disc"/></svg><i class="dd"></i>
        <svg class="ic"><use href="#b-dots"/></svg>
        <svg class="ic"><use href="#b-mon"/></svg>
        <i class="grip g9"></i>
        <svg class="ic"><use href="#b-star"/></svg>
      </div>

      <div class="panel">
        <div class="cols">
          <div class="col"><button>nodes</button><button>node edit</button><button>temp nodes</button><button>distance</button><button>points</button></div>
          <div class="col"><button>lines</button><button>line edit</button><button>length</button></div>
          <div class="col"><button>surfaces</button><button>surface edit</button><button>defeature</button><button>midsurface</button><button>dimensioning</button></div>
          <div class="col"><button>solids</button><button>solid edit</button><button>ribs</button></div>
          <div class="col"><button>quick edit</button><button>edge edit</button><button>point edit</button><button>autocleanup</button></div>
        </div>
        <div class="radios">
          <label><i class="radio on"></i>Geom</label>
          <label><i class="radio"></i>1D</label>
          <label><i class="radio"></i>2D</label>
          <label><i class="radio"></i>3D</label>
          <label><i class="radio"></i>Analysis</label>
          <label><i class="radio"></i>Tool</label>
          <label><i class="radio"></i>Post</label>
        </div>
      </div>
    </div>
  </main>

  <div class="status">
    <span class="st-text">Geometry</span>
    <span class="cell c-a"></span>
    <span class="cell c-a"></span>
    <span class="cell c-b"><i class="mini yel"></i>Ext SPC</span>
    <span class="cell c-c"><i class="mini"></i>Forces</span>
  </div>

  <footer class="taskbar">
    <svg class="win" viewBox="0 0 16 16"><path d="M0 2.300l6.500-.9v6.200H0zM7.500 1.300L16 0v7.600H7.500zM0 8.500h6.500v6.200L0 13.700zM7.500 8.500H16V16l-8.500-1.200z" fill="#fff"/></svg>
    <div class="tasks">
      <span class="task run"><svg class="tk" viewBox="0 0 20 20"><path d="M1 4h7l2 2h9v13H1z" fill="#f6d77c"/><path d="M1 8h18v11H1z" fill="#fbe8a8"/><path d="M4 2h12v4H4z" fill="#6cb6e8"/></svg></span>
      <span class="task run"><svg class="tk" viewBox="0 0 20 20"><circle cx="10" cy="10" r="9.500" fill="#d8432f"/><path d="M10 10L1.500 5.500A9.500 9.500 0 0 0 7 19z" fill="#2e9f47"/><path d="M10 10L7 19.500A9.500 9.500 0 0 0 18.500 6H10z" fill="#f3c21c"/><circle cx="10" cy="10" r="4.500" fill="#fff"/><circle cx="10" cy="10" r="3.500" fill="#3f7fe0"/></svg></span>
      <span class="task"><svg class="tk" viewBox="0 0 20 20"><circle cx="10" cy="10" r="10" fill="#8cbe3c"/><path d="M6 5v7c0 3 4 3 5 1V5h3v10h-3v-1" fill="none" stroke="#fff" stroke-width="2"/></svg></span>
      <span class="task"><svg class="tk" viewBox="0 0 20 20"><circle cx="10" cy="10" r="10" fill="#e8f0f8"/><circle cx="10" cy="10" r="8.500" fill="#3b86d8"/><path d="M12 2L6 11h3l-2 7 7-10h-3z" fill="#fff"/></svg></span>
      <span class="task run act"><svg class="tk wide" viewBox="0 0 24 20"><path d="M7 5l11 1-2 10-9 1z" fill="#7d80a4" stroke="#444a70" stroke-width=".5"/><path d="M10 5v12M13 6v10M7 9l11 1M7 13l10 1" stroke="#444a70" stroke-width=".6"/><path d="M2 4l12-2-1 3H6l-1 7-2 1z" fill="none" stroke="#d02a30" stroke-width="1.200"/><path d="M14 2l3 1-1 3" fill="none" stroke="#d02a30" stroke-width="1.200"/></svg></span>
      <span class="task"><svg class="tk" viewBox="0 0 20 20"><circle cx="10" cy="10" r="10" fill="#1ed760"/><path d="M4 7c4-1.500 8-1 12 1M5 10.500c3-1 7-1 10 .7M6 13.500c2.500-.7 5.500-.7 8 .5" fill="none" stroke="#142" stroke-width="1.600" stroke-linecap="round"/></svg></span>
      <span class="task run"><svg class="tk" viewBox="0 0 20 20"><rect width="20" height="20" fill="#d14a24"/><path d="M6 4h3v9c0 2 2 2 3 1V4h2v11l-3 2H8l-2-2zM9 4h2v7H9z" fill="#fff"/></svg></span>
      <span class="task run"><svg class="tk" viewBox="0 0 20 20"><rect width="20" height="20" fill="#0c0c14" stroke="#ddd" stroke-width="1.500"/><path d="M3 3c8 1 12 6 14 14-5-7-9-10-14-11z" fill="#2e78d8"/><path d="M10 4c3 2 5 4 6 7-2-2-4-4-7-5z" fill="#f2a22a"/></svg></span>
    </div>
    <div class="tray">
      <svg class="kbd" viewBox="0 0 20 12"><rect x=".5" y=".5" width="19" height="11" fill="#5a3a36" stroke="#fff"/><path d="M3 3.500h14M3 6h14" stroke="#fff" stroke-dasharray="1.500 1"/><path d="M6 9h8" stroke="#fff"/></svg>
      <svg class="tr" viewBox="0 0 12 12"><path d="M3 7l3-3 3 3" fill="none" stroke="#eee"/></svg>
      <svg class="tr" viewBox="0 0 12 12"><path d="M2 1v10M2 2h6v5H2" fill="#ddd" stroke="#ddd"/><circle cx="8.500" cy="8.500" r="3" fill="#e02a2a"/></svg>
      <svg class="tr" viewBox="0 0 12 12"><path d="M1 2l4.500-.6v4.300H1zM6.500 1.200L11 .5v5.200H6.500zM1 6.500h4.500v4.300L1 10zM6.500 6.500H11v5l-4.500-.7z" fill="#fff"/></svg>
      <svg class="tr" viewBox="0 0 12 12"><path d="M1 11L11 2v9z" fill="#aaa"/></svg>
      <svg class="tr" viewBox="0 0 12 12"><rect x="3.500" y="1.500" width="5" height="10" fill="#222" stroke="#fff"/></svg>
      <svg class="tr" viewBox="0 0 12 12"><path d="M1 4h2l3-3v10L3 8H1z" fill="#fff"/><circle cx="8.500" cy="8.500" r="3" fill="#e02a2a"/></svg>
      <div class="clock"><span>14:28</span><span>02/11/2015</span></div>
    </div>
  </footer>
</div>
</body>
</html>
```
FILE: styles.css
```css
* { box-sizing: border-box; }
html, body { margin: 0; padding: 0; height: 100%; overflow: hidden; }
body { font-family: Roboto, "Liberation Sans", sans-serif; background: #f0f0f0; color: #333; }
.defs { position: absolute; }
.axt { font: 700 4.500px "Liberation Sans", sans-serif; fill: #444; }

.app { width: 1000px; height: 563px; display: flex; flex-direction: column; filter: blur(.4px); }

.titlebar { height: 16px; background: #db8a80; display: flex; align-items: center; position: relative; padding-left: 4px; flex: none; }
.app-ico { width: 11px; height: 11px; }
.title { position: absolute; left: 0; right: 0; text-align: center; font-size: 9.600px; color: #4a2d2a; }
.winctl { margin-left: auto; display: flex; align-items: center; height: 13px; position: relative; }
.min { width: 7px; height: 1.500px; background: #444; margin-top: 7px; margin-right: 10px; }
.max { width: 8px; height: 7px; border: 1px solid #444; border-top-width: 2px; margin-right: 8px; }
.close { width: 27px; height: 13px; background: #c9534a; color: #fff; font-size: 8px; line-height: 12px; text-align: center; margin-right: 4px; }

.menubar { height: 12px; background: #f6f6f6; display: flex; font-size: 7.800px; line-height: 12px; padding-left: 4px; gap: 8.600px; flex: none; color: #333; }

.toolbar, .bbar { display: flex; align-items: center; flex: none; }
.toolbar { height: 23px; padding-left: 2px; background: #f3f3f3; border-bottom: 1px solid #e4e4e4; }
.ic { width: 16px; height: 16px; margin: 0 1px; flex: none; display: block; overflow: visible; }
.dd { width: 7px; flex: none; display: flex; justify-content: center; align-items: center; height: 8px; position: relative; }
.dd::after { content: ""; border: 2px solid transparent; border-top: 3px solid #222; border-bottom: 0; }
.dd.faded::after { border-top-color: #c4c4c4; }
.grip { width: 4px; height: 16px; flex: none; background: radial-gradient(circle, #444 .8px, transparent 1.100px) center top / 2px 3.500px repeat-y; }
.g6 { width: 2px; margin: 0 3px 0 3px; }
.g8 { width: 2px; margin: 0 2px 0 4px; }
.g9 { width: 2px; margin: 0 3px 0 4px; }
.g11 { width: 2px; margin: 0 4px 0 5px; }
.g3 { width: 2px; margin: 0 1px 0 1px; }
.gap3 { width: 3px; flex: none; }
.sep { width: 1px; height: 17px; background: #c4c4c4; margin: 0 3px 0 2px; flex: none; }
.faint { opacity: .35; }

.body { flex: 1; display: flex; min-height: 0; }

.left { width: 243px; flex: none; display: flex; flex-direction: column; padding: 1px 0 1px 2px; }
.tabs { display: flex; height: 15px; padding-left: 1px; gap: 2px; flex: none; align-items: flex-end; }
.tab { height: 14px; border: 1px solid #bbb; border-bottom: 0; border-left-color: #e8e8e8; font-size: 8px; line-height: 14px; color: #555; text-align: center; padding: 0 4px; border-right: 1.500px solid #999; }
.tab:nth-child(1) { width: 40px; }
.tab:nth-child(2) { width: 30px; }
.tab.on { width: 35px; font-weight: 700; color: #222; height: 15px; background: #f4f4f4; }
.tabpanel { flex: 1; display: flex; flex-direction: column; border-top: 1px solid #bdbdbd; border-right: 1px solid #aaa; min-height: 0; }
.lrow { display: flex; align-items: center; flex: none; }
.r1 { height: 17px; padding-left: 2px; gap: 1px; }
.r1 .ic { margin: 0 1px; }
.lic.active { width: 18px; height: 16px; background: #f4b27a; border: 1px solid #ea9a5c; display: flex; align-items: center; justify-content: center; }
.lic.active .ic { margin: 0; }
.r2 { height: 19px; padding-left: 2px; }
.r2 .ic.nar { width: 12px; }
.r2 .ic.wide { margin: 0 2.200px; }
.r2 .ic.wide:nth-of-type(8) { margin-left: 3px; }

.tree { height: 243px; flex: none; background: #fff; border: 1px solid #c4c4c4; }
.thead { height: 14px; background: #eeeeee; border-bottom: 1px solid #dcdcdc; display: flex; align-items: center; font-size: 8px; color: #444; padding-top: 2px; }
.th-name { width: 90px; padding-left: 1px; border-right: 1px solid #ccc; height: 100%; line-height: 11px; }
.th-id { width: 11px; padding-left: 1px; font-size: 7.500px; }
.th-wheel { width: 10px; height: 10px; margin-left: 1px; }
.trow { height: 11.750px; display: flex; align-items: center; font-size: 7.500px; color: #444; padding-left: 3px; white-space: nowrap; }
.exp { width: 6px; height: 6px; border: 1px solid #aaa; font-size: 6px; line-height: 3.500px; text-align: center; font-style: normal; margin-right: 4px; flex: none; color: #555; }
.ti { width: 11px; height: 11px; flex: none; margin-right: 1px; }
.tl { margin-left: 3px; }
.sub { padding-left: 19px; }
.conn { width: 6px; height: 6px; border-left: 1px dotted #999; border-bottom: 1px dotted #999; margin-top: -6px; flex: none; }
.sub .ti { margin-right: 2px; }
.tn { width: 35px; margin-left: 3px; }
.tn.one { width: 48px; }
.sub.b { font-weight: 700; color: #222; }
.tid { width: 8px; text-align: right; font-size: 8px; }
.sw { width: 8px; height: 8px; background: #8c8c8c; border: 1px solid #555; margin-left: 5px; }
.sw.red { background: #e80000; }
.sw.yel { background: #ffe17a; }

.splitter { height: 9px; flex: none; display: flex; justify-content: flex-end; align-items: center; padding-right: 4px; background: #f0f0f0; }
.splitter .dd::after { border-width: 3px; border-top-width: 3px; border-bottom: 0; }
.nv { flex: 1; background: #fff; border: 1px solid #c4c4c4; }
.nvhead { height: 13px; background: #eee; border-bottom: 1px solid #ddd; font-size: 8px; padding-left: 2px; line-height: 12px; color: #444; }

.right { flex: 1; display: flex; flex-direction: column; min-width: 0; border-left: 1px solid #c0c0c0; margin-left: 2px; }
.pager { height: 10px; flex: none; text-align: right; font-size: 7.500px; line-height: 10px; padding-right: 7px; color: #333; }
.work { display: flex; height: 331px; flex: none; }
.vbar { width: 22px; flex: none; display: flex; flex-direction: column; align-items: center; padding-left: 4px; gap: 2.500px; }
.vbar .ic { margin: 0; width: 15px; height: 15px; }
.vbar .brk { margin-top: 5px; }
.vbar .brk2 { margin-top: 2px; }
.hgrip { width: 16px; height: 6px; flex: none; background: radial-gradient(circle, #444 .7px, transparent 1px) left center / 4px 3px repeat-x; }
.viewport { width: 728px; flex: none; border: 1px solid #5fd8dc; border-top-color: #49c8d0; background: linear-gradient(#2d577f, #9c9c9c); position: relative; overflow: hidden; }
.modelinfo { position: absolute; top: 6px; right: 7px; font: 8.750px/11px "Liberation Sans", sans-serif; color: #dde3e8; white-space: nowrap; }
.scene { display: block; }
.tri { font: 9px "Liberation Sans", sans-serif; fill: #dcdcdc; }

.bbar { height: 21px; padding-left: 3px; }
.bbar .g6 { margin: 0 3px 0 2px; }
.bbar .ic { margin: 0 1.250px; }
.bbar .sep { margin: 0 4px 0 2px; }
.bbar .s2 { margin: 0 2px; }
.bbar .combo ~ .ic { margin: 0 1px; }
.combo { height: 14px; background: #fff; font-size: 7.200px; line-height: 14px; color: #444; padding-left: 1px; display: flex; justify-content: space-between; align-items: center; flex: none; margin-right: 1px; }
.combo.c1 { width: 48px; }
.combo.c2 { width: 50px; }

.panel { flex: 1; display: flex; border-top: 1px solid #c8c8c8; margin: 3px 0 0 0; padding: 9px 0 0 2px; min-height: 0; }
.cols { display: flex; width: 677px; flex: none; align-items: flex-start; }
.col { width: 135.200px; display: flex; flex-direction: column; flex: none; }
.col button { appearance: none; height: 13px; background: #f0f0f0; border: 0; border-top: 1px solid #fafafa; border-right: 1px solid #8a8a8a; border-bottom: 1.500px solid #8a8a8a; border-radius: 0; margin: 0 0 0 1px; padding: 0; font: 8.500px/10px Roboto, sans-serif; color: #444; }
.radios { display: flex; flex-direction: column; padding-left: 6px; }
.radios label { height: 13px; display: flex; align-items: center; font-size: 8.800px; color: #444; }
.radio { width: 7px; height: 7px; border-radius: 50%; background: #fff; border: 1px solid; border-color: #444 #bbb #bbb #444; margin-right: 7px; display: block; flex: none; }
.radio.on { background: radial-gradient(circle, #222 1.400px, #fff 1.800px); }

.status { height: 14px; flex: none; display: flex; align-items: stretch; font-size: 8px; line-height: 13px; color: #444; background: #f0f0f0; border-top: 1px solid #dadada; padding-left: 2px; }
.st-text { width: 728px; flex: none; }
.cell { border-top: 1px solid #555; border-left: 1px solid #555; display: flex; align-items: center; font-size: 8px; padding-left: 3px; flex: none; margin-right: 1px; }
.c-a { width: 62px; }
.c-b { width: 71px; }
.c-c { width: 70px; }
.mini { width: 5px; height: 5px; background: #888; border: 1px solid #444; margin-right: 2px; display: block; flex: none; }
.mini.yel { background: #f0d258; }

.taskbar { height: 24px; flex: none; background: #583833; display: flex; align-items: center; padding-left: 7px; }
.win { width: 16px; height: 16px; flex: none; }
.tasks { display: flex; gap: 2px; margin-left: 9px; height: 24px; }
.task { width: 36px; height: 24px; display: flex; align-items: center; justify-content: center; }
.task.run { background: #785a55; }
.task.act { background: #9c8581; }
.tk { width: 20px; height: 20px; }
.tk.wide { width: 24px; }
.tray { margin-left: auto; display: flex; align-items: center; height: 24px; width: 185px; padding-left: 10px; background: linear-gradient(#583833 50%, #6e514c 50%); gap: 4.500px; }
.kbd { width: 20px; height: 12px; flex: none; margin-right: 2px; }
.tr { width: 11px; height: 11px; flex: none; }
.clock { display: flex; flex-direction: column; align-items: center; font-size: 8.500px; line-height: 11px; color: #e8e0de; margin-left: 7px; }
```
